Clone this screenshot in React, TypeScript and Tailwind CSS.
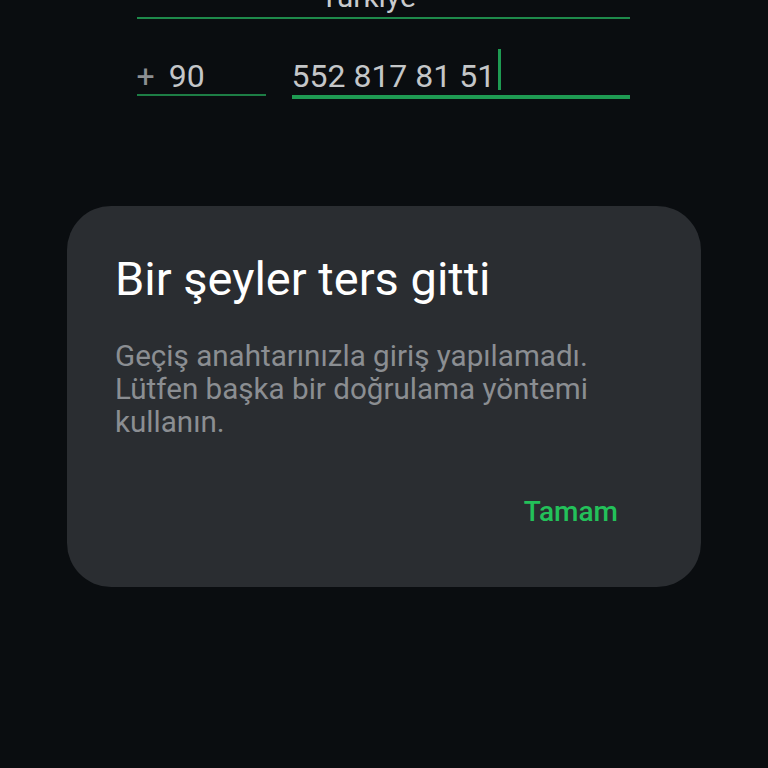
import React from "react";

const App = () => {
  return (
    <div
      className="w-[768px] h-[768px] overflow-hidden bg-[#0a0d10] text-white flex flex-col items-center"
      style={{ fontFamily: "Roboto, 'Noto Sans', sans-serif" }}
    >
      {/* country selector (scrolled off the top) */}
      <div className="w-[493px] ml-[-2px] mt-[-21px] flex flex-col items-center">
        <div className="text-[30px] leading-[36px] text-[#c9cbcd] pr-[30px]">Türkiye</div>
        <div className="w-full h-[2px] bg-[#1e8a4b] mt-[2px]" />
      </div>

      {/* phone row */}
      <div className="w-[493px] ml-[-2px] mt-[39px] flex items-start gap-[26px]">
        <div className="w-[129px] flex flex-col">
          <div className="flex items-baseline text-[32px] leading-[36px] text-[#c4c6c8]">
            <span className="text-[#8c8f92] mr-[14px]">+</span>
            <span>90</span>
          </div>
          <div className="h-[2px] bg-[#1d7d45]" />
        </div>
        <div className="flex-1 flex flex-col">
          <div className="flex items-start text-[32px] leading-[36px] text-[#c4c6c8]">
            <span>552 817 81 51</span>
            <span className="w-[3px] h-[41px] mt-[-9px] bg-[#1e9a52] ml-[3px]" />
          </div>
          <div className="h-[4px] bg-[#1e9a52] mt-[1px]" />
        </div>
      </div>

      {/* dialog */}
      <div className="mt-[107px] w-[634px] h-[381px] rounded-[44px] bg-[#2a2d31] px-[48px] pt-[45px] flex flex-col">
        <div className="text-[47px] leading-[56px] text-white">Bir şeyler ters gitti</div>
        <div className="mt-[33px] text-[29.6px] leading-[33px] text-[#8b8e92]">
          Geçiş anahtarınızla giriş yapılamadı.
          <br />
          Lütfen başka bir doğrulama yöntemi
          <br />
          kullanın.
        </div>
        <div className="mt-[57px] flex justify-end pr-[35px]">
          <span className="text-[28px] leading-[32px] font-medium text-[#23c15a]">Tamam</span>
        </div>
      </div>
    </div>
  );
};

export default App;
